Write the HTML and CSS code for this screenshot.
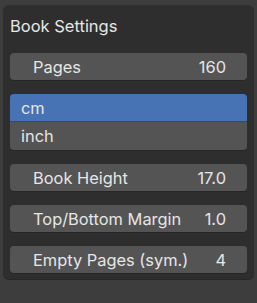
FILE: index.html
```html
<!DOCTYPE html>
<html>
<head>
<meta charset="utf-8">
<link rel="stylesheet" href="styles.css">
</head>
<body>
<div class="panel">
  <div class="header">Book Settings</div>
  <div class="body">
    <div class="field"><span class="label">Pages</span><span class="value">160</span></div>
    <div class="list">
      <div class="item selected">cm</div>
      <div class="item">inch</div>
    </div>
    <div class="field"><span class="label">Book Height</span><span class="value">17.0</span></div>
    <div class="field"><span class="label">Top/Bottom Margin</span><span class="value">1.0</span></div>
    <div class="field"><span class="label">Empty Pages (sym.)</span><span class="value">4</span></div>
  </div>
</div>
</body>
</html>
```

FILE: styles.css
```css
html, body {
  margin: 0;
  padding: 0;
}
body {
  background: #3d3d3d;
  width: 257px;
  height: 303px;
  padding: 5px 3px 0 3px;
  box-sizing: border-box;
  font-family: Inter, "DejaVu Sans", sans-serif;
  color: #e6e6e6;
}
.panel {
  background: #2e2e2e;
  border-radius: 6px;
  box-shadow: 0 1px 0 #272727;
}
.header {
  height: 41px;
  display: flex;
  align-items: center;
  padding-left: 7px;
  font-size: 16.5px;
}
.body {
  display: flex;
  flex-direction: column;
  gap: 14px;
  padding: 7px 7px 6px 7px;
}
.field {
  height: 27px;
  background: #545454;
  border-radius: 4px;
  display: flex;
  align-items: center;
  justify-content: space-between;
  padding: 0 21px 0 23px;
  font-size: 16.4px;
  box-shadow: 0 1px 0 #262626;
}
.list {
  display: flex;
  flex-direction: column;
  border-radius: 4px;
  overflow: hidden;
  box-shadow: 0 1px 0 #262626;
}
.item {
  height: 28px;
  background: #545454;
  display: flex;
  align-items: center;
  padding-left: 11px;
  font-size: 16.4px;
}
.item.selected {
  background: #4772b3;
  border-bottom: 1px solid #2e4a75;
  height: 27px;
}
```
